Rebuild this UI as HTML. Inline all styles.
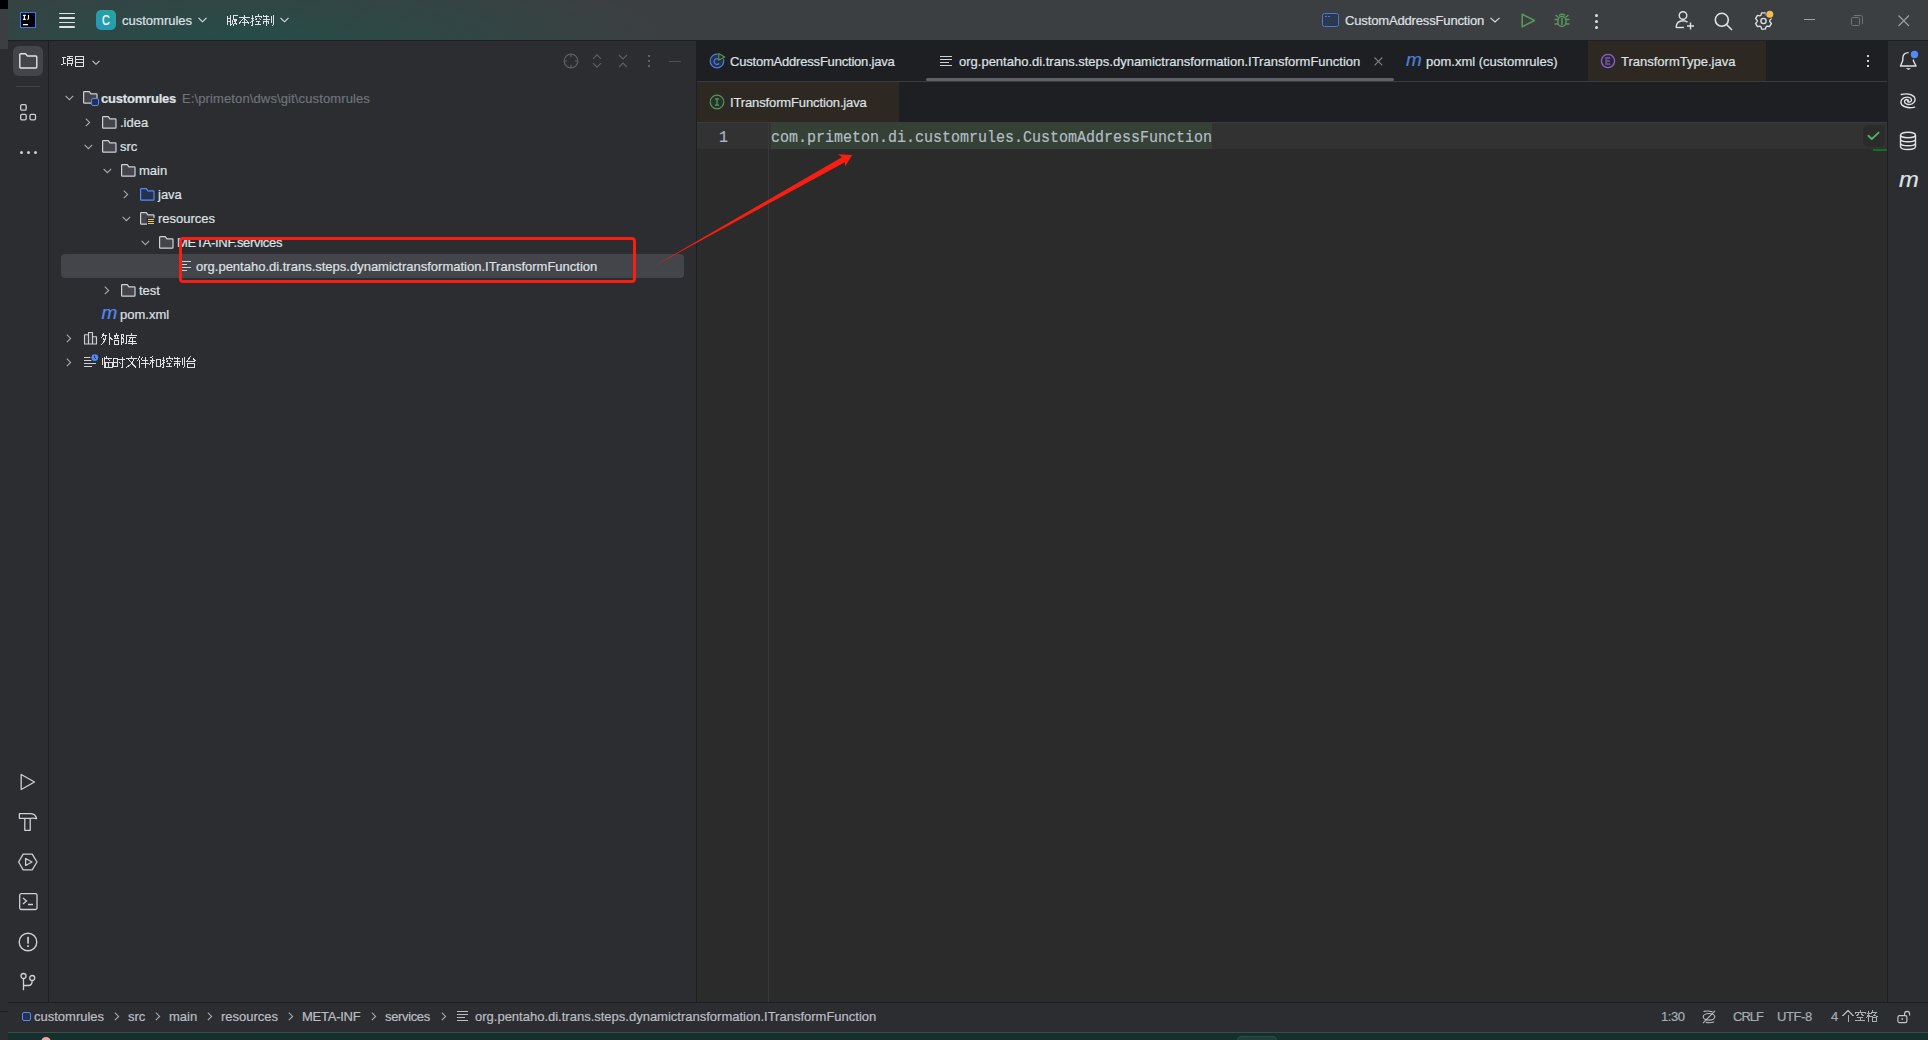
<!DOCTYPE html>
<html><head><meta charset="utf-8">
<style>
*{margin:0;padding:0;box-sizing:border-box}
html,body{width:1928px;height:1040px;overflow:hidden;background:#2b2d30;font-family:"Liberation Sans",sans-serif;font-size:13px;color:#dfe1e5}
.a{position:absolute}
.t{position:absolute;white-space:nowrap;line-height:16px;-webkit-text-stroke:0.2px currentColor}
svg{position:absolute;overflow:visible}
</style></head><body>
<!-- window offset strips -->
<div class="a" style="left:0;top:0;width:8px;height:9px;background:#000"></div>
<div class="a" style="left:0;top:9px;width:8px;height:40px;background:#3b3f41"></div>

<!-- header -->

<div class="a" style="left:8px;top:0;width:1920px;height:40px;background:radial-gradient(ellipse 430px 80px at 230px 40px, rgba(22,86,76,0.6), rgba(22,86,76,0.3) 50%, rgba(22,86,76,0) 100%), #3c3f41"></div>
<!-- IJ logo -->
<div class="a" style="left:20px;top:12px;width:16px;height:16px;background:#000;border:1px solid #2f7bff"></div>
<svg style="left:20px;top:12px" width="16" height="16"><path d="M2.9 3.4 H5.8 M4.35 3.4 V7.4 M2.9 7.4 H5.8 M8.5 3 V6.6 Q8.5 7.5 7.3 7.5 M2.9 12.6 H8" fill="none" stroke="#fff" stroke-width="1.1"/></svg>
<!-- hamburger -->
<div class="a" style="left:59px;top:12.5px;width:16px;height:1.5px;background:#dfe1e5;border-radius:1px"></div>
<div class="a" style="left:59px;top:17px;width:16px;height:1.5px;background:#dfe1e5;border-radius:1px"></div>
<div class="a" style="left:59px;top:21.5px;width:16px;height:1.5px;background:#dfe1e5;border-radius:1px"></div>
<div class="a" style="left:59px;top:26px;width:16px;height:1.5px;background:#dfe1e5;border-radius:1px"></div>
<!-- project C -->
<div class="a" style="left:96px;top:10px;width:20px;height:20px;border-radius:5px;background:linear-gradient(45deg,#2596be,#27a69b)"></div>
<div class="t" style="left:102px;top:12px;font:15px/16px 'Liberation Sans';color:#fff;transform:scaleX(0.72);transform-origin:0 0">C</div>
<div class="t" style="left:122px;top:13px">customrules</div>
<svg style="left:198px;top:17px" width="9" height="6"><path d="M0.5 0.8 L4.5 4.8 L8.5 0.8" fill="none" stroke="#dfe1e5" stroke-width="1.1"/></svg>
<svg style="left:226px;top:14px" width="12" height="12" shape-rendering="crispEdges"><path d="M1.5 1.5V11 M4 0.5V11.5 M1.5 4.5H4 M1.5 7.5H4 M6.5 1.5H11.5 M7 1.5V6 Q7 9 5.5 11.5 M7 5H10.5 Q10 9 7 11.5 M8 6.5L11.5 11.5" fill="none" stroke="#dfe1e5" stroke-width="1.0"/></svg>
<svg style="left:238px;top:14px" width="12" height="12" shape-rendering="crispEdges"><path d="M0.5 3.5H11.5 M6 0.5V11.5 M6 3.5L0.8 10 M6 3.5L11.2 10 M3.5 8.5H8.5" fill="none" stroke="#dfe1e5" stroke-width="1.0"/></svg>
<svg style="left:250px;top:14px" width="12" height="12" shape-rendering="crispEdges"><path d="M0.5 4H4 M2.5 0.5V10.5 Q2.5 11.5 1.5 11 M0.5 8.5L4 6.5 M8 0.3V1.8 M5 4V2.5H11V4 M7.2 3.5L5.5 6.2 M8.8 3.5L10.8 6.2 M6 7.5H10 M8 7.5V10.8 M5 10.8H11.2" fill="none" stroke="#dfe1e5" stroke-width="1.0"/></svg>
<svg style="left:262px;top:14px" width="12" height="12" shape-rendering="crispEdges"><path d="M1.5 1L1 2.5 M1 2.5H7 M0.5 5H7.5 M4 0.5V11.5 M1.5 10V7H6.5V10 M9 2V9 M11 0.5V11 Q11 11.5 10 11.3" fill="none" stroke="#dfe1e5" stroke-width="1.0"/></svg>
<svg style="left:280px;top:17px" width="9" height="6"><path d="M0.5 0.8 L4.5 4.8 L8.5 0.8" fill="none" stroke="#dfe1e5" stroke-width="1.1"/></svg>

<!-- run config -->
<div class="a" style="left:1322px;top:13px;width:17px;height:14px;border:1.2px solid #4d78cc;border-radius:2.5px;background:#2c3850"></div>
<div class="a" style="left:1325px;top:16px;width:2px;height:1px;background:#4d78cc"></div>
<div class="a" style="left:1328px;top:16px;width:2px;height:1px;background:#4d78cc"></div>
<div class="t" style="left:1345px;top:13px;letter-spacing:-0.15px">CustomAddressFunction</div>
<svg style="left:1490px;top:17px" width="10" height="6"><path d="M0.5 0.8 L5 5 L9.5 0.8" fill="none" stroke="#dfe1e5" stroke-width="1.1"/></svg>
<!-- run -->
<svg style="left:1521px;top:13px" width="15" height="15"><path d="M1.2 1.2 L13.5 7.5 L1.2 13.8 Z" fill="none" stroke="#57965c" stroke-width="1.6" stroke-linejoin="round"/></svg>
<!-- debug bug -->
<svg style="left:1553px;top:12px" width="18" height="17"><g fill="none" stroke="#57965c" stroke-width="1.5"><path d="M6 3.5 Q9 1 12 3.5"/><rect x="5" y="4.5" width="8" height="10" rx="4"/><path d="M9 6v7M1.5 7.5h3.5M13 7.5h3.5M1.5 12h3.5M13 12h3.5M2.5 3l3 2.5M15.5 3l-3 2.5"/></g></svg>
<!-- kebab -->
<div class="a" style="left:1594.5px;top:13.5px;width:3px;height:3px;border-radius:50%;background:#dfe1e5"></div>
<div class="a" style="left:1594.5px;top:19.5px;width:3px;height:3px;border-radius:50%;background:#dfe1e5"></div>
<div class="a" style="left:1594.5px;top:25.5px;width:3px;height:3px;border-radius:50%;background:#dfe1e5"></div>
<!-- add user -->
<svg style="left:1675px;top:10px" width="20" height="21"><g fill="none" stroke="#dfe1e5" stroke-width="1.4"><circle cx="8" cy="5.5" r="3.8"/><path d="M1 17.5 Q1.5 10.8 8 10.8 Q11 10.8 12.5 12.3"/><path d="M15.5 12.5v7M12 16h7"/><path d="M1 17.5h8"/></g></svg>
<!-- search -->
<svg style="left:1714px;top:12px" width="20" height="19"><g fill="none" stroke="#dfe1e5" stroke-width="1.6"><circle cx="7.8" cy="7.8" r="6.5"/><path d="M12.5 12.5 L18 18"/></g></svg>
<!-- settings -->
<svg style="left:1754px;top:10.5px" width="20" height="20"><g fill="none" stroke="#dfe1e5" stroke-width="1.35" stroke-linejoin="round"><path d="M6.94 4.24 L7.63 1.91 L11.37 1.91 L12.06 4.24 L13.20 4.90 L15.57 4.34 L17.44 7.57 L15.77 9.34 L15.77 10.66 L17.44 12.43 L15.57 15.66 L13.20 15.10 L12.06 15.76 L11.37 18.09 L7.63 18.09 L6.94 15.76 L5.80 15.10 L3.43 15.66 L1.56 12.43 L3.23 10.66 L3.23 9.34 L1.56 7.57 L3.43 4.34 L5.80 4.90 Z"/><circle cx="9.5" cy="10" r="2.6"/></g><circle cx="15.8" cy="3.3" r="4.4" fill="#3c3f41"/><circle cx="15.8" cy="3.3" r="3.5" fill="#f0bf52"/></svg>
<!-- window controls -->
<div class="a" style="left:1804px;top:19px;width:11px;height:1px;background:#9da0a8"></div>
<svg style="left:1851px;top:15px" width="12" height="12"><g fill="none" stroke="#6f737a" stroke-width="1"><rect x="0.5" y="2.5" width="8" height="8" rx="1"/><path d="M3 0.5h6.5a2 2 0 0 1 2 2v6.5"/></g></svg>
<svg style="left:1898px;top:15px" width="12" height="12"><path d="M0.5 0.5 L11 11 M11 0.5 L0.5 11" stroke="#9da0a8" stroke-width="1.1"/></svg>

<div class="a" style="left:8px;top:40px;width:1920px;height:1px;background:#1e1f22"></div>

<!-- left stripe -->
<div class="a" style="left:8px;top:41px;width:40px;height:962px;background:#2b2d30"></div>
<div class="a" style="left:48px;top:41px;width:1px;height:962px;background:#1e1f22"></div>

<!-- project panel -->
<div class="a" style="left:49px;top:41px;width:647px;height:962px;background:#2b2d30"></div>
<div class="a" style="left:696px;top:41px;width:1px;height:962px;background:#1e1f22"></div>

<!-- editor -->
<div class="a" style="left:697px;top:41px;width:1190px;height:41px;background:#1e1f22"></div>
<div class="a" style="left:697px;top:81px;width:1190px;height:1px;background:#393b40"></div>
<div class="a" style="left:697px;top:82px;width:1190px;height:40px;background:#1e1f22"></div>
<div class="a" style="left:697px;top:122px;width:1190px;height:881px;background:#2b2b2b"></div>
<div class="a" style="left:697px;top:123px;width:1190px;height:26px;background:#323232"></div>
<div class="a" style="left:697px;top:122px;width:1190px;height:1px;background:#393b40"></div>
<div class="a" style="left:768px;top:123px;width:1px;height:879px;background:#393939"></div>

<!-- right stripe -->
<div class="a" style="left:1887px;top:41px;width:1px;height:962px;background:#1e1f22"></div>
<div class="a" style="left:1888px;top:41px;width:40px;height:962px;background:#2b2d30"></div>


<!-- status bar -->
<div class="a" style="left:8px;top:1002px;width:1920px;height:1px;background:#1e1f22"></div>
<div class="a" style="left:8px;top:1003px;width:1920px;height:29px;background:#2b2d30"></div>
<div class="a" style="left:8px;top:1032px;width:1920px;height:8px;background:#15302c"></div>


<!-- left stripe icons -->
<div class="a" style="left:13px;top:46px;width:30px;height:30px;border-radius:6px;background:#43454a"></div>
<svg style="left:19px;top:53px" width="19" height="16"><path d="M0.8 1.8 Q0.8 0.8 1.8 0.8 H6.5 L8.5 3 H16.8 Q17.8 3 17.8 4 V14 Q17.8 15 16.8 15 H1.8 Q0.8 15 0.8 14 Z" fill="none" stroke="#dfe1e5" stroke-width="1.4" stroke-linejoin="round"/></svg>
<div class="a" style="left:16px;top:86px;width:24px;height:1px;background:#43454a"></div>
<svg style="left:20px;top:104px" width="17" height="17"><g fill="none" stroke="#ced0d6" stroke-width="1.3"><rect x="0.7" y="0.7" width="5.5" height="5.5" rx="1.3"/><rect x="0.7" y="10.3" width="5.5" height="5.5" rx="1.3"/><rect x="10" y="10.3" width="5.5" height="5.5" rx="1.3"/></g></svg>
<div class="a" style="left:19.5px;top:150.5px;width:3px;height:3px;border-radius:50%;background:#ced0d6"></div>
<div class="a" style="left:26.5px;top:150.5px;width:3px;height:3px;border-radius:50%;background:#ced0d6"></div>
<div class="a" style="left:33.5px;top:150.5px;width:3px;height:3px;border-radius:50%;background:#ced0d6"></div>

<svg style="left:20px;top:773px" width="16" height="18"><path d="M1.2 1.5 L14.5 9 L1.2 16.5 Z" fill="none" stroke="#ced0d6" stroke-width="1.3" stroke-linejoin="round"/></svg>
<svg style="left:18px;top:812px" width="20" height="20"><g fill="none" stroke="#ced0d6" stroke-width="1.3" stroke-linejoin="round"><path d="M1.4 1.6 H13 Q17.6 2 18.6 6.6 Q15.8 5.6 12.4 6.4 H1.4 Z"/><path d="M6.8 6.4 V18.3 H12.2 V6.4"/></g></svg>
<svg style="left:18px;top:852px" width="20" height="20"><g fill="none" stroke="#ced0d6" stroke-width="1.3" stroke-linejoin="round"><path d="M5.2 2.2 H14.2 L19 10 L14.2 17.8 H5.2 L0.6 10 Z"/><path d="M7.6 6.5 L14 10 L7.6 13.5 Z"/></g></svg>
<svg style="left:19px;top:893px" width="19" height="18"><g fill="none" stroke="#ced0d6" stroke-width="1.3"><rect x="0.7" y="0.7" width="17.3" height="15.8" rx="1.5"/><path d="M4 5 L7.5 8 L4 11 M9 11.5 H14"/></g></svg>
<svg style="left:18px;top:932px" width="20" height="20"><g fill="none" stroke="#ced0d6" stroke-width="1.4"><circle cx="10" cy="10" r="8.8"/></g><rect x="9.2" y="4.8" width="1.7" height="6.8" fill="#ced0d6"/><rect x="9.2" y="13.2" width="1.7" height="1.8" fill="#ced0d6"/></svg>
<svg style="left:19px;top:973px" width="19" height="18"><g fill="none" stroke="#ced0d6" stroke-width="1.3"><circle cx="4.5" cy="3" r="2.5"/><circle cx="13.2" cy="5" r="2.5"/><path d="M4.5 5.5 V17.2 M4.5 12.5 H9.5 Q13.2 12.5 13.2 7.5"/></g></svg>

<!-- right stripe icons -->
<svg style="left:1899px;top:50px" width="20" height="22"><g fill="none" stroke="#dfe1e5" stroke-width="1.4" stroke-linejoin="round"><path d="M9.6 2.6 Q4 2.6 3.8 8 V10.5 L1.5 16 H17 L14.4 10.8 V9.4"/></g><path d="M6.8 18.3 H12 L9.4 20 Z" fill="#dfe1e5"/><circle cx="15.5" cy="4.5" r="3.7" fill="#548af7"/></svg>
<svg style="left:1899px;top:92px" width="18" height="18"><g fill="none" stroke="#dfe1e5" stroke-width="1.4" stroke-linecap="round"><path d="M2.3 2.5 Q11 0.5 15.2 4.8 Q17.8 9.2 13 11.8 Q8.5 13.5 6 11 Q4.5 8.5 7.5 7.5 Q9.5 7.3 9.5 9"/><path d="M15.7 15.1 Q7 17.1 2.8 12.8 Q0.2 8.4 5 5.8 Q9.5 4.1 12 6.6 Q13.5 9.1 10.5 10.1 Q8.5 10.3 8.5 8.6"/></g></svg>
<svg style="left:1899px;top:131px" width="18" height="20"><g fill="none" stroke="#dfe1e5" stroke-width="1.4"><ellipse cx="9" cy="4" rx="7.5" ry="2.8"/><path d="M1.5 4 V15.5 Q1.5 18.5 9 18.5 Q16.5 18.5 16.5 15.5 V4 M1.5 8 Q1.5 10.8 9 10.8 Q16.5 10.8 16.5 8 M1.5 12 Q1.5 14.8 9 14.8 Q16.5 14.8 16.5 12"/></g></svg>
<div class="t" style="left:1898.5px;top:168px;font:italic 22px/24px 'Liberation Sans';color:#dfe1e5;transform:scaleX(1.08);transform-origin:0 0">m</div>

<!-- project panel header -->
<svg style="left:61px;top:55px" width="12" height="12" shape-rendering="crispEdges"><path d="M0.5 2H4.5 M2.5 2V9 M0.5 9.5L5 8 M5.5 1H11.5 M8.5 1L8 3 M6 3H11V8.5H6Z M6 5.7H11 M7.5 8.5L5.5 11.5 M9.5 8.5L11.5 11.5" fill="none" stroke="#dfe1e5" stroke-width="1.0"/></svg>
<svg style="left:73px;top:55px" width="12" height="12" shape-rendering="crispEdges"><path d="M2 1H10V11H2Z M2 4.3H10 M2 7.6H10" fill="none" stroke="#dfe1e5" stroke-width="1.0"/></svg>
<svg style="left:92px;top:59.5px" width="9" height="6"><path d="M0.5 0.8 L4 4.3 L7.5 0.8" fill="none" stroke="#ced0d6" stroke-width="1.1"/></svg>
<svg style="left:563px;top:53px" width="16" height="16"><g fill="none" stroke="#5d6066" stroke-width="1.2"><circle cx="8" cy="8" r="6.8"/><path d="M8 1.2V4.2M8 11.8v3M1.2 8H4.2M11.8 8h3"/></g></svg>
<svg style="left:592px;top:53px" width="10" height="16"><path d="M1 5.8 L5 1.8 L9 5.8 M1 10.2 L5 14.2 L9 10.2" fill="none" stroke="#5d6066" stroke-width="1.1"/></svg>
<svg style="left:618px;top:53px" width="10" height="16"><path d="M1 2 L5 6 L9 2 M1 14 L5 10 L9 14" fill="none" stroke="#5d6066" stroke-width="1.1"/></svg>
<div class="a" style="left:648px;top:55px;width:2px;height:2px;background:#5d6066"></div>
<div class="a" style="left:648px;top:60px;width:2px;height:2px;background:#5d6066"></div>
<div class="a" style="left:648px;top:65px;width:2px;height:2px;background:#5d6066"></div>
<div class="a" style="left:669px;top:60.5px;width:12px;height:1.6px;background:#4e5156"></div>



<!-- editor tabs -->
<div class="a" style="left:1588px;top:41px;width:178px;height:40px;background:#2e2822"></div>
<div class="a" style="left:697px;top:82px;width:202px;height:40px;background:#2e2822"></div>
<div class="a" style="left:926px;top:78px;width:468px;height:3px;border-radius:1.5px;background:#5f6166"></div>
<svg style="left:709px;top:53px" width="17" height="17"><circle cx="8" cy="8" r="6.8" fill="#25324d" stroke="#4d7ddb" stroke-width="1.2"/><path d="M10.1 6.5 A2.9 2.9 0 1 0 10.1 10.5" fill="none" stroke="#4d7ddb" stroke-width="1.2"/><path d="M9.75 0.2 L16.5 3.9 L9.75 7.8 Z" fill="#1e1f22" stroke="#1e1f22" stroke-width="1.6" stroke-linejoin="round"/><path d="M9.75 0.6 L15.75 3.9 L9.75 7.3 Z" fill="#223126" stroke="#57965c" stroke-width="1.1" stroke-linejoin="round"/></svg>
<div class="t" style="left:730px;top:54px;letter-spacing:-0.2px">CustomAddressFunction.java</div>
<svg style="left:940px;top:56px" width="13" height="12"><path d="M0 0.5h12M0 3.5h12M0 6.5h9M0 9.5h12" stroke="#ced0d6" stroke-width="1"/></svg>
<div class="t" style="left:959px;top:54px">org.pentaho.di.trans.steps.dynamictransformation.ITransformFunction</div>
<svg style="left:1374px;top:57px" width="9" height="9"><path d="M0.5 0.5 L8.3 8.3 M8.3 0.5 L0.5 8.3" stroke="#7a7e85" stroke-width="1.1"/></svg>
<div class="t" style="left:1406px;top:50px;font:italic 19px/20px 'Liberation Sans';color:#4f7fd8;letter-spacing:-0.5px">m</div>
<div class="t" style="left:1426px;top:54px">pom.xml (customrules)</div>
<svg style="left:1600px;top:53px" width="16" height="16"><circle cx="8" cy="8" r="6.6" fill="#2c2535" stroke="#8b62c9" stroke-width="1.3"/><path d="M10.3 5 H6.2 V11.2 H10.3 M6.2 8 H9.8" fill="none" stroke="#66508c" stroke-width="1.8"/></svg>
<div class="t" style="left:1621px;top:54px">TransformType.java</div>
<div class="a" style="left:1867px;top:55px;width:2.2px;height:2.2px;background:#ced0d6"></div>
<div class="a" style="left:1867px;top:60px;width:2.2px;height:2.2px;background:#ced0d6"></div>
<div class="a" style="left:1867px;top:65px;width:2.2px;height:2.2px;background:#ced0d6"></div>

<svg style="left:709px;top:94px" width="17" height="17"><circle cx="8" cy="8" r="6.8" fill="#25332a" stroke="#57965c" stroke-width="1.2"/><path d="M6 4.8 H10 M6 11.2 H10 M8 4.8 V11.2" fill="none" stroke="#57965c" stroke-width="1.3"/></svg>
<div class="t" style="left:730px;top:95px;letter-spacing:-0.13px">ITransformFunction.java</div>

<!-- editor content -->
<div class="a" style="left:771px;top:123px;width:441px;height:26px;background:#344134"></div>
<div class="t" style="left:719px;top:130px;font:15px/17px 'Liberation Mono';color:#a9b7c6;transform:scaleY(1.13);transform-origin:0 13px">1</div>
<div class="t" style="left:771px;top:130px;font:15px/17px 'Liberation Mono';color:#b3bcc6;transform:scaleY(1.13);transform-origin:0 13px">com.primeton.di.customrules.CustomAddressFunction</div>
<div class="a" style="left:1863px;top:125px;width:22px;height:22px;border-radius:5px;background:#2b2b2b"></div>
<svg style="left:1867px;top:131px" width="13" height="10"><path d="M1.4 4.8 L4.8 8 L11.6 1.6" fill="none" stroke="#5fa868" stroke-width="1.9" stroke-linecap="round" stroke-linejoin="round"/></svg>
<div class="a" style="left:1873px;top:149px;width:14px;height:2px;background:#0a7514"></div>

<!-- status bar content -->
<div class="a" style="left:22px;top:1012px;width:9px;height:9px;border:1.3px solid #548af7;border-radius:2px;background:#25324d"></div>
<div class="t" style="left:34px;top:1009px;color:#bcbec4">customrules</div>
<div class="t" style="left:128px;top:1009px;color:#bcbec4">src</div>
<div class="t" style="left:169px;top:1009px;color:#bcbec4">main</div>
<div class="t" style="left:221px;top:1009px;color:#bcbec4">resources</div>
<div class="t" style="left:302px;top:1009px;color:#bcbec4;letter-spacing:-0.25px">META-INF</div>
<div class="t" style="left:385px;top:1009px;color:#bcbec4;letter-spacing:-0.35px">services</div>
<svg style="left:114px;top:1012px" width="6" height="9"><path d="M0.8 0.6 L4.6 4.4 L0.8 8.2" fill="none" stroke="#a8adb2" stroke-width="1.1"/></svg>
<svg style="left:155px;top:1012px" width="6" height="9"><path d="M0.8 0.6 L4.6 4.4 L0.8 8.2" fill="none" stroke="#a8adb2" stroke-width="1.1"/></svg>
<svg style="left:207px;top:1012px" width="6" height="9"><path d="M0.8 0.6 L4.6 4.4 L0.8 8.2" fill="none" stroke="#a8adb2" stroke-width="1.1"/></svg>
<svg style="left:288px;top:1012px" width="6" height="9"><path d="M0.8 0.6 L4.6 4.4 L0.8 8.2" fill="none" stroke="#a8adb2" stroke-width="1.1"/></svg>
<svg style="left:371px;top:1012px" width="6" height="9"><path d="M0.8 0.6 L4.6 4.4 L0.8 8.2" fill="none" stroke="#a8adb2" stroke-width="1.1"/></svg>
<svg style="left:441px;top:1012px" width="6" height="9"><path d="M0.8 0.6 L4.6 4.4 L0.8 8.2" fill="none" stroke="#a8adb2" stroke-width="1.1"/></svg>
<svg style="left:457px;top:1011px" width="12" height="11"><path d="M0 0.5h11M0 3.5h11M0 6.5h8M0 9.5h11" stroke="#bcbec4" stroke-width="1"/></svg>
<div class="t" style="left:475px;top:1009px;color:#bcbec4">org.pentaho.di.trans.steps.dynamictransformation.ITransformFunction</div>
<div class="t" style="left:1661px;top:1009px;color:#a8adb2;letter-spacing:-0.4px">1:30</div>
<svg style="left:1701px;top:1010px" width="16" height="14"><g fill="none" stroke="#b4b8bf" stroke-width="1.15" stroke-linecap="round"><path d="M3 1.4 Q7 0.6 11 1.6"/><ellipse cx="8" cy="6.8" rx="5.8" ry="3.3"/><path d="M5.3 12.4 Q9 13.2 12.8 12"/><path d="M2.4 12.7 L13.7 1.2"/></g></svg>
<div class="t" style="left:1733px;top:1009px;color:#a8adb2;letter-spacing:-1px">CRLF</div>
<div class="t" style="left:1777px;top:1009px;color:#a8adb2;letter-spacing:-0.4px">UTF-8</div>
<div class="t" style="left:1831px;top:1009px;color:#a8adb2">4</div>
<svg style="left:1842px;top:1010px" width="12" height="12" shape-rendering="crispEdges"><path d="M6 0.5L0.5 6 M6 0.5L11.5 6 M6 4.5V11.8" fill="none" stroke="#a8adb2" stroke-width="1.0"/></svg>
<svg style="left:1854px;top:1010px" width="12" height="12" shape-rendering="crispEdges"><path d="M6 0V1.5 M1 4V2.5H11V4 M4.8 3.5L2.5 6 M7.2 3.5L9.5 6 M3 7.2H9 M6 7.2V10.8 M1 10.8H11" fill="none" stroke="#a8adb2" stroke-width="1.0"/></svg>
<svg style="left:1866px;top:1010px" width="12" height="12" shape-rendering="crispEdges"><path d="M0.5 3.5H4.5 M2.5 0.5V11.8 M2.5 3.5L0.5 8.5 M2.5 5L4.5 7 M7 0.5L5 4 M6 2H10.8 Q9 5.5 5.2 7 M7.5 3.8L11.5 7 M6 7.5H10.5V11H6Z" fill="none" stroke="#a8adb2" stroke-width="1.0"/></svg>
<svg style="left:1897px;top:1010px" width="15" height="14"><g fill="none" stroke="#c4c7cc" stroke-width="1.15"><rect x="0.9" y="5.6" width="9" height="7" rx="1.6"/><path d="M7.6 5.6 V3.8 Q7.6 1.3 10.1 1.3 Q12.6 1.3 12.6 3.8 V5.4"/></g><rect x="4.6" y="8" width="1.4" height="2" fill="#a8adb2"/></svg>
<div class="a" style="left:0;top:1011px;width:8px;height:1px;background:#1e1f22"></div>
<div class="a" style="left:8px;top:1032px;width:1920px;height:1px;background:#38504b"></div>
<div class="a" style="left:40.5px;top:1037px;width:10.5px;height:10.5px;border-radius:50%;background:#f4a1a6"></div>
<div class="a" style="left:1237px;top:1036px;width:40px;height:10px;border-radius:4px;background:#213f3a;border:1px solid #2c4b46"></div>

<!-- tree -->
<div class="a" style="left:61px;top:254px;width:623px;height:24px;border-radius:4px;background:#43454a"></div>
<svg style="left:65px;top:95px" width="9" height="6"><path d="M0.6 0.8 L4.4 4.6 L8.2 0.8" fill="none" stroke="#a8adb2" stroke-width="1.1"/></svg>
<svg style="left:83px;top:91px" width="15" height="13"><path d="M0.6 1.4 Q0.6 0.6 1.4 0.6 H6.3 L7.9 2.8 H13.2 Q14 2.8 14 3.6 V11.4 Q14 12.2 13.2 12.2 H1.4 Q0.6 12.2 0.6 11.4 Z" fill="#43454a" stroke="#ced0d6" stroke-width="1.2" stroke-linejoin="round"/></svg>
<div class="a" style="left:91px;top:98px;width:8px;height:8px;border:1.2px solid #548af7;border-radius:2px;background:#25324d"></div>
<div class="t" style="left:101px;top:91px;font-weight:bold;letter-spacing:-0.2px">customrules</div>
<div class="t" style="left:182px;top:91px;color:#6f737a;letter-spacing:0.12px">E:\primeton\dws\git\customrules</div>
<svg style="left:85px;top:118px" width="6" height="9"><path d="M0.8 0.6 L4.6 4.4 L0.8 8.2" fill="none" stroke="#a8adb2" stroke-width="1.1"/></svg>
<svg style="left:102px;top:116px" width="15" height="13"><path d="M0.6 1.4 Q0.6 0.6 1.4 0.6 H6.3 L7.9 2.8 H13.2 Q14 2.8 14 3.6 V11.4 Q14 12.2 13.2 12.2 H1.4 Q0.6 12.2 0.6 11.4 Z" fill="#43454a" stroke="#ced0d6" stroke-width="1.2" stroke-linejoin="round"/></svg>
<div class="t" style="left:120px;top:115px">.idea</div>
<svg style="left:84px;top:144px" width="9" height="6"><path d="M0.6 0.8 L4.4 4.6 L8.2 0.8" fill="none" stroke="#a8adb2" stroke-width="1.1"/></svg>
<svg style="left:102px;top:140px" width="15" height="13"><path d="M0.6 1.4 Q0.6 0.6 1.4 0.6 H6.3 L7.9 2.8 H13.2 Q14 2.8 14 3.6 V11.4 Q14 12.2 13.2 12.2 H1.4 Q0.6 12.2 0.6 11.4 Z" fill="#43454a" stroke="#ced0d6" stroke-width="1.2" stroke-linejoin="round"/></svg>
<div class="t" style="left:120px;top:139px">src</div>
<svg style="left:103px;top:168px" width="9" height="6"><path d="M0.6 0.8 L4.4 4.6 L8.2 0.8" fill="none" stroke="#a8adb2" stroke-width="1.1"/></svg>
<svg style="left:121px;top:164px" width="15" height="13"><path d="M0.6 1.4 Q0.6 0.6 1.4 0.6 H6.3 L7.9 2.8 H13.2 Q14 2.8 14 3.6 V11.4 Q14 12.2 13.2 12.2 H1.4 Q0.6 12.2 0.6 11.4 Z" fill="#43454a" stroke="#ced0d6" stroke-width="1.2" stroke-linejoin="round"/></svg>
<div class="t" style="left:139px;top:163px">main</div>
<svg style="left:123px;top:190px" width="6" height="9"><path d="M0.8 0.6 L4.6 4.4 L0.8 8.2" fill="none" stroke="#a8adb2" stroke-width="1.1"/></svg>
<svg style="left:140px;top:188px" width="15" height="13"><path d="M0.6 1.4 Q0.6 0.6 1.4 0.6 H6.3 L7.9 2.8 H13.2 Q14 2.8 14 3.6 V11.4 Q14 12.2 13.2 12.2 H1.4 Q0.6 12.2 0.6 11.4 Z" fill="#25324d" stroke="#548af7" stroke-width="1.2" stroke-linejoin="round"/></svg>
<div class="t" style="left:158px;top:187px">java</div>
<svg style="left:122px;top:216px" width="9" height="6"><path d="M0.6 0.8 L4.4 4.6 L8.2 0.8" fill="none" stroke="#a8adb2" stroke-width="1.1"/></svg>
<svg style="left:140px;top:212px" width="15" height="13"><path d="M0.6 1.4 Q0.6 0.6 1.4 0.6 H6.3 L7.9 2.8 H13.2 Q14 2.8 14 3.6 V11.4 Q14 12.2 13.2 12.2 H1.4 Q0.6 12.2 0.6 11.4 Z" fill="#43454a" stroke="#ced0d6" stroke-width="1.2" stroke-linejoin="round"/></svg>
<svg style="left:147px;top:218px" width="8" height="7"><rect x="0" y="0" width="8" height="7" fill="#2b2d30"/><path d="M1 1.5h6M1 3.5h6M1 5.5h6" stroke="#f2c55c" stroke-width="1"/></svg>
<div class="t" style="left:158px;top:211px">resources</div>
<svg style="left:141px;top:240px" width="9" height="6"><path d="M0.6 0.8 L4.4 4.6 L8.2 0.8" fill="none" stroke="#a8adb2" stroke-width="1.1"/></svg>
<svg style="left:159px;top:236px" width="15" height="13"><path d="M0.6 1.4 Q0.6 0.6 1.4 0.6 H6.3 L7.9 2.8 H13.2 Q14 2.8 14 3.6 V11.4 Q14 12.2 13.2 12.2 H1.4 Q0.6 12.2 0.6 11.4 Z" fill="#43454a" stroke="#ced0d6" stroke-width="1.2" stroke-linejoin="round"/></svg>
<div class="t" style="left:177px;top:235px;letter-spacing:-0.3px">META-INF.services</div>
<svg style="left:179px;top:261px" width="12" height="11"><path d="M0 0.5h12M0 3.5h8M0 6.5h12M0 9.5h8" stroke="#ced0d6" stroke-width="1"/></svg>
<div class="t" style="left:196px;top:259px">org.pentaho.di.trans.steps.dynamictransformation.ITransformFunction</div>
<svg style="left:104px;top:286px" width="6" height="9"><path d="M0.8 0.6 L4.6 4.4 L0.8 8.2" fill="none" stroke="#a8adb2" stroke-width="1.1"/></svg>
<svg style="left:121px;top:284px" width="15" height="13"><path d="M0.6 1.4 Q0.6 0.6 1.4 0.6 H6.3 L7.9 2.8 H13.2 Q14 2.8 14 3.6 V11.4 Q14 12.2 13.2 12.2 H1.4 Q0.6 12.2 0.6 11.4 Z" fill="#43454a" stroke="#ced0d6" stroke-width="1.2" stroke-linejoin="round"/></svg>
<div class="t" style="left:139px;top:283px">test</div>
<div class="t" style="left:101.5px;top:303px;font:italic 19px/20px 'Liberation Sans';color:#548af7;letter-spacing:-0.5px">m</div>
<div class="t" style="left:120px;top:307px">pom.xml</div>
<svg style="left:66px;top:334px" width="6" height="9"><path d="M0.8 0.6 L4.6 4.4 L0.8 8.2" fill="none" stroke="#a8adb2" stroke-width="1.1"/></svg>
<svg style="left:84px;top:332px" width="14" height="13"><path d="M0.5 12 V2.8 H4.5 V0.5 H8.5 V4.8 H12.5 V12 Z" fill="#3a3c41" stroke="#ced0d6" stroke-width="1.1" stroke-linejoin="round"/><path d="M4.5 2.8 V12 M8.5 4.8 V12" stroke="#ced0d6" stroke-width="1.1"/></svg>
<svg style="left:101px;top:333px" width="12" height="12" shape-rendering="crispEdges"><path d="M2.5 0 L0.8 5 M1.5 2.5 H5.2 Q4.6 8 0.5 11.5 M2 5.5 L4 7 M8.5 0 V11.5 M9 4.5 L11.5 7" fill="none" stroke="#dfe1e5" stroke-width="1.0"/></svg>
<svg style="left:113px;top:333px" width="12" height="12" shape-rendering="crispEdges"><path d="M3.3 0.3V1.5 M0.5 2.2H6 M1.8 3L2.5 4.8 M4.7 3L4 4.8 M0.5 5.3H6.2 M1 7H5.5V11H1Z M8 0.5V11.5 M8 1H11 L9.5 5 Q11.5 6.5 11 8.5 Q10.5 9.5 9 9" fill="none" stroke="#dfe1e5" stroke-width="1.0"/></svg>
<svg style="left:125px;top:333px" width="12" height="12" shape-rendering="crispEdges"><path d="M6 0.3V1.5 M1.5 2H11.5 M1.8 2V7 Q1.8 10 0.5 11.5 M3.5 4.5H10.5 M6 4.5L4 8H10.5 M3 10H11.5 M7.2 5V11.8" fill="none" stroke="#dfe1e5" stroke-width="1.0"/></svg>
<svg style="left:66px;top:358px" width="6" height="9"><path d="M0.8 0.6 L4.6 4.4 L0.8 8.2" fill="none" stroke="#a8adb2" stroke-width="1.1"/></svg>
<svg style="left:84px;top:356px" width="15" height="13"><path d="M0 1.5h6.5M0 4.5h7.5M0 7.5h12M0 10.5h8" stroke="#ced0d6" stroke-width="1.1"/><circle cx="10.8" cy="1.6" r="4.2" fill="#2b2d30"/><circle cx="10.8" cy="1.6" r="3.4" fill="#548af7"/><path d="M10.6 -0.4 V1.8 L12 2.9" fill="none" stroke="#1e2a44" stroke-width="0.9"/></svg>
<svg style="left:101px;top:356px" width="12" height="12" shape-rendering="crispEdges"><path d="M1 1.5V9 M3 0.5V11.5 M5.5 0.5L4.5 3.5 M5 2.5H10.5 M7.3 3.3L8.8 4.8 M4.5 6H11V11H4.5Z M7.75 6V11" fill="none" stroke="#dfe1e5" stroke-width="1.0"/></svg>
<svg style="left:113px;top:356px" width="12" height="12" shape-rendering="crispEdges"><path d="M0.5 2H4V10H0.5Z M0.5 6H4 M5 3.5H11.5 M9.5 0.5V11 Q9.5 11.8 8.3 11.3 M6.3 5.8L7.6 7.8" fill="none" stroke="#dfe1e5" stroke-width="1.0"/></svg>
<svg style="left:125px;top:356px" width="12" height="12" shape-rendering="crispEdges"><path d="M6 0.3V1.8 M0.5 2.5H11.5 M3 3L10.8 11.5 M9 3Q6.5 9 1 11.5" fill="none" stroke="#dfe1e5" stroke-width="1.0"/></svg>
<svg style="left:137px;top:356px" width="12" height="12" shape-rendering="crispEdges"><path d="M2.8 0.5L0.5 5 M2 3.5V11.8 M5.5 0.8L4.5 4 M4.5 4H11 M3.5 7.5H11.5 M8 0.5V11.8" fill="none" stroke="#dfe1e5" stroke-width="1.0"/></svg>
<svg style="left:149px;top:356px" width="12" height="12" shape-rendering="crispEdges"><path d="M4.5 0.5L1 2 M0.5 4H5.5 M3 1.5V11.8 M3 4.5L0.5 9 M3 5L5 7 M7 3H11V10H7Z" fill="none" stroke="#dfe1e5" stroke-width="1.0"/></svg>
<svg style="left:161px;top:356px" width="12" height="12" shape-rendering="crispEdges"><path d="M0.5 4H4 M2.5 0.5V10.5 Q2.5 11.5 1.5 11 M0.5 8.5L4 6.5 M8 0.3V1.8 M5 4V2.5H11V4 M7.2 3.5L5.5 6.2 M8.8 3.5L10.8 6.2 M6 7.5H10 M8 7.5V10.8 M5 10.8H11.2" fill="none" stroke="#dfe1e5" stroke-width="1.0"/></svg>
<svg style="left:173px;top:356px" width="12" height="12" shape-rendering="crispEdges"><path d="M1.5 1L1 2.5 M1 2.5H7 M0.5 5H7.5 M4 0.5V11.5 M1.5 10V7H6.5V10 M9 2V9 M11 0.5V11 Q11 11.5 10 11.3" fill="none" stroke="#dfe1e5" stroke-width="1.0"/></svg>
<svg style="left:185px;top:356px" width="12" height="12" shape-rendering="crispEdges"><path d="M5.5 0.5L2 5.5H10 M8 2.5L10.8 5.2 M2.5 7H9.5V11H2.5Z" fill="none" stroke="#dfe1e5" stroke-width="1.0"/></svg>


<div class="a" style="left:179px;top:237px;width:456.5px;height:45.5px;border:3.4px solid #f71e12;border-radius:4px"></div>
<!-- red arrow -->
<svg style="left:0;top:0" width="1928" height="1040"><path d="M651.5 267.5 L841.8 157.2 L838.2 154.2 L852.2 155 L845.2 166.6 L844.9 162.2 Z" fill="#f71e12"/></svg>

</body></html>
